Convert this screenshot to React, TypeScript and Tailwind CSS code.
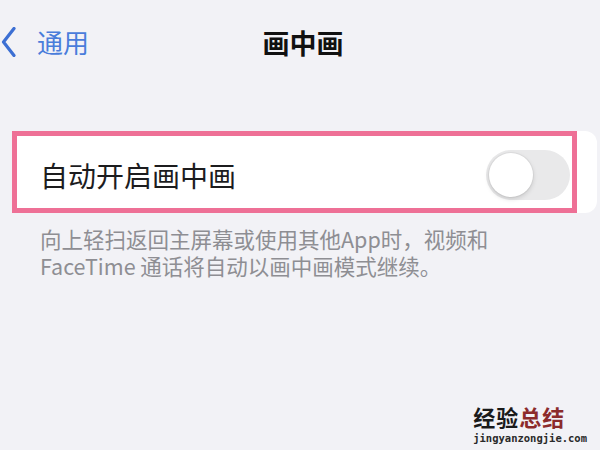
import React from 'react';

const cjk = { fontFamily: '"Noto Sans CJK SC", "Noto Sans", sans-serif' };

export default function App() {
  return (
    <div className="flex h-[450px] w-[600px] flex-col overflow-hidden bg-[#f2f2f6]" style={cjk}>
      {/* nav bar */}
      <div className="grid h-[84px] grid-cols-[1fr_auto_1fr] items-center">
        <div className="flex items-center pl-[1px]">
          <svg width="15" height="30" viewBox="0 0 15 30" fill="none">
            <polyline
              points="13,1.5 2.5,15 13,28.5"
              stroke="#3c6fd3"
              strokeWidth="3.2"
              strokeLinecap="round"
              strokeLinejoin="round"
            />
          </svg>
          <span className="ml-[21px] text-[26px] leading-none text-[#4a7ddb]">通用</span>
        </div>
        <div className="ml-[6px] text-[27px] font-bold leading-none text-[#111]">画中画</div>
        <div />
      </div>

      {/* setting card */}
      <div className="ml-[12px] mt-[47px] h-[82px] w-[585px] rounded-r-[12px] bg-white">
        <div className="flex h-[82px] w-[565px] items-center justify-between border-[5px] border-[#ee7096] pl-[23px] pr-[2px] pt-[6px]">
          <span className="text-[28px] leading-none text-[#1c1c1e]">自动开启画中画</span>
          <div className="flex h-[50px] w-[84px] items-center rounded-full bg-[#e9e9ea] pl-[3px]">
            <div className="h-[44px] w-[44px] rounded-full bg-white shadow-[0_2px_5px_rgba(0,0,0,0.15),0_0_0_1px_rgba(0,0,0,0.04)]" />
          </div>
        </div>
      </div>

      {/* footer note */}
      <div className="mt-[12px] pl-[40px] text-[21.5px] leading-[27px] text-[#8e8e93]">
        <div>向上轻扫返回主屏幕或使用其他App时，视频和</div>
        <div>FaceTime 通话将自动以画中画模式继续。</div>
      </div>

      <div className="flex-1" />

      {/* watermark */}
      <div className="flex justify-end pb-[4px] pr-[13px]">
        <div className="flex flex-col">
          <div className="text-[22px] font-bold leading-[28px] tracking-[1px]">
            <span className="text-[#1a1a1a]">经验</span>
            <span className="text-[#8c2b2b]">总结</span>
          </div>
          <div
            className="text-[10.5px] font-bold leading-[16px] text-[#2a2a2a]"
            style={{ fontFamily: '"DejaVu Sans Mono", monospace' }}
          >
            jingyanzongjie.com
          </div>
        </div>
      </div>
    </div>
  );
}
